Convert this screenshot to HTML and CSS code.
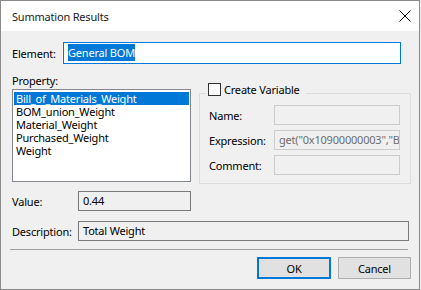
FILE: index.html
```html
<!DOCTYPE html>
<html lang="en">
<head>
    <meta charset="UTF-8">
    <title>Summation Results</title>
    <link rel="stylesheet" href="styles.css">
</head>
<body>
    <div class="ventana">
        <div class="titulo">
            <span class="titulo-texto">Summation Results</span>
            <svg class="cerrar" width="12" height="12" viewBox="0 0 12 12">
                <path d="M0.5 0.5L11.5 11.5M11.5 0.5L0.5 11.5" stroke="#000" stroke-width="1" fill="none"/>
            </svg>
        </div>
        <div class="contenido">
            <div class="fila fila-elemento">
                <span class="etiqueta etiqueta-elemento">Element:</span>
                <div class="campo campo-foco campo-elemento"><span class="seleccion">General BOM</span></div>
            </div>
            <div class="principal">
                <div class="izquierda">
                    <div class="etiqueta etiqueta-prop">Property:</div>
                    <div class="lista">
                        <div class="item activo">Bill_of_Materials_Weight</div>
                        <div class="item">BOM_union_Weight</div>
                        <div class="item">Material_Weight</div>
                        <div class="item">Purchased_Weight</div>
                        <div class="item">Weight</div>
                    </div>
                </div>
                <div class="grupo">
                    <div class="leyenda"><span class="casilla"></span>Create Variable</div>
                    <div class="grupo-caja">
                        <div class="grupo-fila">
                            <span class="grupo-etiqueta">Name:</span>
                            <div class="campo campo-off"></div>
                        </div>
                        <div class="grupo-fila">
                            <span class="grupo-etiqueta">Expression:</span>
                            <div class="campo campo-off texto-gris">get("0x10900000003","Bill_of_Materials_Weight")</div>
                        </div>
                        <div class="grupo-fila">
                            <span class="grupo-etiqueta">Comment:</span>
                            <div class="campo campo-off"></div>
                        </div>
                    </div>
                </div>
            </div>
            <div class="fila fila-valor">
                <span class="etiqueta etiqueta-ancha">Value:</span>
                <div class="campo campo-lectura campo-valor">0.44</div>
            </div>
            <div class="fila fila-desc">
                <span class="etiqueta etiqueta-ancha">Description:</span>
                <div class="campo campo-lectura campo-desc">Total Weight</div>
            </div>
            <div class="separador"></div>
            <div class="botones">
                <button class="boton boton-ok">OK</button>
                <button class="boton boton-cancelar">Cancel</button>
            </div>
        </div>
    </div>
</body>
</html>
```

FILE: styles.css
```css
* {
    box-sizing: border-box;
}
body {
    margin: 0;
    font-family: "Noto Sans", "Open Sans", sans-serif;
    font-size: 11px;
    letter-spacing: -0.2px;
    color: #000;
    background: #f0f0f0;
}
.ventana {
    width: 420px;
    height: 290px;
    border: 1px solid #8a8a8a;
    display: flex;
    flex-direction: column;
    background: #f0f0f0;
}
.titulo {
    height: 30px;
    background: white;
    display: flex;
    align-items: center;
    justify-content: space-between;
    padding: 0 8px 0 11px;
}
.titulo-texto {
    color: #1b1b1b;
}
.contenido {
    flex: 1;
    padding: 11px 0 0 11px;
}
.fila {
    display: flex;
    align-items: center;
}
.fila-elemento {
    height: 22px;
}
.etiqueta {
    line-height: 15px;
}
.etiqueta-elemento {
    width: 51px;
}
.etiqueta-ancha {
    width: 66px;
}
.campo {
    height: 20px;
    border: 1px solid #7a7a7a;
    background: white;
    padding: 0 4px;
    line-height: 18px;
    white-space: nowrap;
    overflow: hidden;
}
.campo-elemento {
    width: 338px;
    height: 22px;
    line-height: 20px;
}
.campo-foco {
    border-color: #0078d7;
}
.seleccion {
    background: #0078d7;
    color: white;
    padding: 1px 0;
}
.campo-lectura {
    background: #f0f0f0;
}
.campo-valor {
    width: 113px;
}
.campo-desc {
    width: 331px;
}
.principal {
    display: flex;
    gap: 8px;
    margin-top: 9px;
}
.izquierda {
    width: 179px;
}
.lista {
    margin-top: 1px;
    height: 93px;
    border: 1px solid #828790;
    background: white;
    padding: 2px 1px;
}
.item {
    line-height: 13px;
    padding-left: 2px;
    white-space: nowrap;
}
.activo {
    background: #0078d7;
    color: white;
}
.grupo {
    width: 212px;
    margin-top: 10px;
}
.leyenda {
    position: relative;
    display: inline-flex;
    align-items: center;
    height: 13px;
    line-height: 13px;
    margin-left: 7px;
    padding: 0 6px 0 2px;
    background: #f0f0f0;
}
.casilla {
    width: 13px;
    height: 13px;
    border: 1px solid #333;
    background: white;
    margin-right: 3px;
}
.grupo-caja {
    margin-top: -6px;
    height: 91px;
    border: 1px solid #dcdcdc;
    padding: 11px 10px 0 9px;
}
.grupo-fila {
    display: flex;
    align-items: center;
    height: 20px;
    margin-bottom: 5px;
}
.grupo-etiqueta {
    width: 65px;
}
.campo-off {
    flex: 1;
    background: #f0f0f0;
    border-color: #cccccc;
}
.texto-gris {
    color: #6d6d6d;
}
.fila-valor {
    margin-top: 7px;
}
.fila-desc {
    margin-top: 10px;
}
.separador {
    margin: 8px 0 0 -2px;
    width: 398px;
    height: 1px;
    background: #a0a0a0;
}
.botones {
    display: flex;
    justify-content: flex-end;
    gap: 7px;
    margin: 7px 8px 0 0;
}
.boton {
    height: 22px;
    font-family: inherit;
    font-size: 11px;
    letter-spacing: -0.2px;
    background: #e1e1e1;
    border: 1px solid #adadad;
    color: #000;
    padding: 0;
}
.boton-ok {
    width: 74px;
    border: 2px solid #0078d7;
}
.boton-cancelar {
    width: 73px;
}
```
